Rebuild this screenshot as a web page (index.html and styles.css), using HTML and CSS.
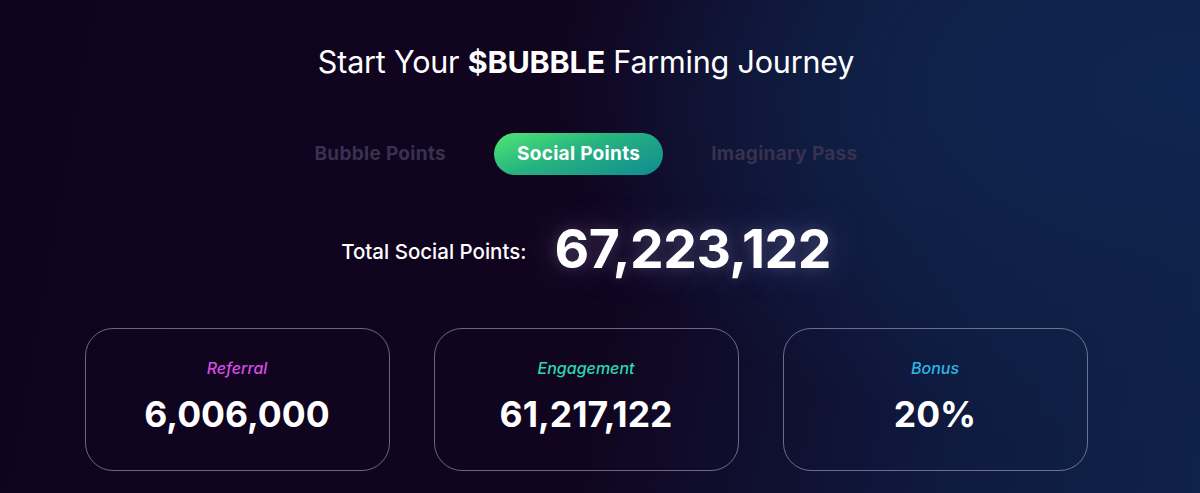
FILE: index.html
```html
<!DOCTYPE html>
<html lang="en">
<head>
<meta charset="utf-8">
<title>Start Your $BUBBLE Farming Journey</title>
<link rel="stylesheet" href="styles.css">
</head>
<body>
<main class="page">
  <h1 class="title">Start Your <strong>$BUBBLE</strong> Farming Journey</h1>
  <nav class="tabs">
    <span class="tab">Bubble Points</span>
    <span class="tab tab-active">Social Points</span>
    <span class="tab">Imaginary Pass</span>
  </nav>
  <section class="total">
    <span class="total-label">Total Social Points:</span>
    <span class="total-value">67,223,122</span>
  </section>
  <section class="cards">
    <div class="card">
      <span class="card-label referral">Referral</span>
      <span class="card-value">6,006,000</span>
    </div>
    <div class="card">
      <span class="card-label engagement">Engagement</span>
      <span class="card-value">61,217,122</span>
    </div>
    <div class="card">
      <span class="card-label bonus">Bonus</span>
      <span class="card-value">20%</span>
    </div>
  </section>
</main>
</body>
</html>
```
FILE: styles.css
```css
html, body {
  margin: 0;
  height: 100%;
}
body {
  font-family: "Inter", "Lato", sans-serif;
  color: #ffffff;
  background:
    radial-gradient(ellipse 55% 75% at 100% 18%, #0f2450 0%, #0f224a 40%, rgba(15,34,74,0) 100%),
    linear-gradient(100deg, #10031f 0%, #10041f 50%, #0f1a3f 80%, #0f2249 100%);
  overflow: hidden;
}
.page {
  width: 1172px;
  display: flex;
  flex-direction: column;
  align-items: center;
  padding-top: 44px;
}
.title {
  margin: 0;
  font-size: 30.5px;
  font-weight: 400;
  line-height: 36px;
  letter-spacing: -0.2px;
}
.title strong {
  font-weight: 700;
}
.tabs {
  margin-top: 53px;
  display: flex;
  align-items: center;
  gap: 48px;
}
.tab {
  font-size: 19px;
  font-weight: 700;
  letter-spacing: 0.3px;
  color: #383150;
  line-height: 42px;
}
.tab-active {
  color: #ffffff;
  padding: 0 23px;
  border-radius: 21px;
  background: linear-gradient(160deg, #50e675 0%, #27b37f 45%, #0f8b92 100%);
}
.total {
  margin-top: 42px;
  display: flex;
  align-items: center;
  gap: 28px;
}
.total-label {
  font-size: 20.5px;
  font-weight: 500;
  margin-top: 4px;
}
.total-value {
  font-size: 53.5px;
  font-weight: 700;
  line-height: 64px;
  letter-spacing: -0.5px;
  text-shadow: 0 0 40px rgba(200, 190, 255, 0.28), 0 0 14px rgba(220, 210, 255, 0.18);
}
.cards {
  margin-top: 47px;
  display: flex;
  gap: 44px;
}
.card {
  width: 305px;
  height: 143px;
  box-sizing: border-box;
  border: 1px solid rgba(190, 180, 210, 0.55);
  border-radius: 28px;
  display: flex;
  flex-direction: column;
  align-items: center;
  padding-top: 29px;
}
.card-label {
  font-size: 16px;
  font-style: italic;
  font-weight: 500;
  line-height: 20px;
}
.referral { color: #d54ee0; }
.engagement { color: #2ad9ad; }
.bonus { color: #2bb7e6; }
.card-value {
  margin-top: 17px;
  font-size: 35.5px;
  font-weight: 700;
  line-height: 40px;
}
```
